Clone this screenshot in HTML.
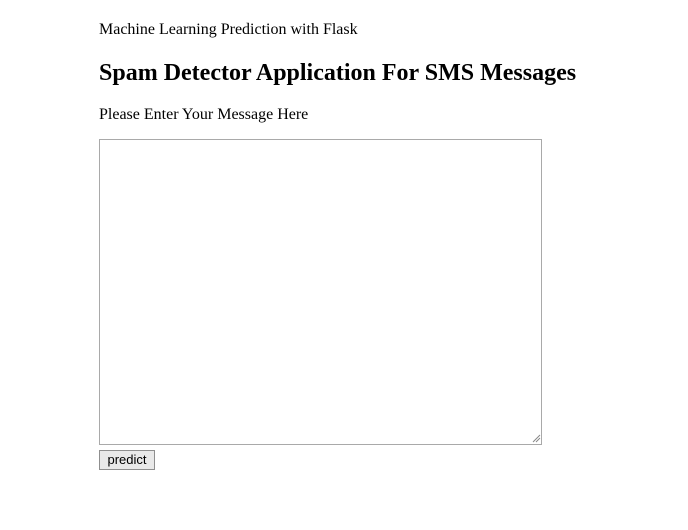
<!DOCTYPE html>
<html><head><style>
body{margin:0;background:#fff;font-family:"Liberation Serif",serif;color:#000;}
.t{position:absolute;left:99px;white-space:nowrap;}
</style></head><body>
<div class="t" style="top:20px;font-size:16px;line-height:20px;">Machine Learning Prediction with Flask</div>
<div class="t" style="top:59px;font-size:24px;line-height:28px;font-weight:bold;">Spam Detector Application For SMS Messages</div>
<div class="t" style="top:105px;font-size:16px;line-height:20px;">Please Enter Your Message Here</div>
<div style="position:absolute;left:99px;top:139px;width:441px;height:304px;border:1px solid #a9a9a9;"></div>
<svg style="position:absolute;left:532px;top:434px" width="9" height="9"><path d="M1 8L8 1M4 8L8 4" stroke="#888" stroke-width="1"/></svg>
<div style="position:absolute;left:99px;top:450px;width:54px;height:18px;border:1px solid #8f8f8f;background:#e9e9e9;font-family:'Liberation Sans',sans-serif;font-size:13px;line-height:18px;text-align:center;">predict</div>
</body></html>
